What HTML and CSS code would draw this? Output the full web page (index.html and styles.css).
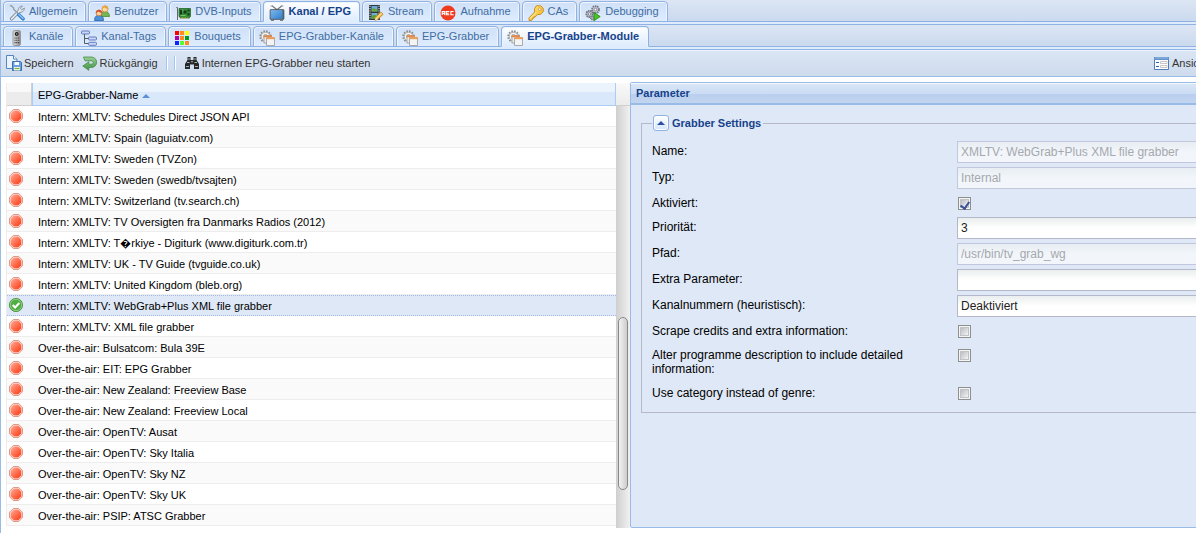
FILE: index.html
```
<!DOCTYPE html>
<html lang="de">
<head>
<meta charset="utf-8">
<title>EPG-Grabber-Module</title>
<link rel="stylesheet" href="styles.css">
</head>
<body>
<svg class="sprite" aria-hidden="true">
  <defs>
    <linearGradient id="red" x1="0" y1="0" x2="1" y2="1"><stop offset="0" stop-color="#ffac98"/><stop offset=".5" stop-color="#ff6f50"/><stop offset="1" stop-color="#f93a16"/></linearGradient>
    <linearGradient id="tvblue" x1="0" y1="0" x2="1" y2="1"><stop offset="0" stop-color="#7db8ee"/><stop offset="1" stop-color="#2f7fcb"/></linearGradient>
    <linearGradient id="undo" x1="0" y1="0" x2="0" y2="1"><stop offset="0" stop-color="#9bcf99"/><stop offset="1" stop-color="#3d9440"/></linearGradient>
    <linearGradient id="gold" x1="0" y1="0" x2="1" y2="1"><stop offset="0" stop-color="#ffef8a"/><stop offset="1" stop-color="#f0b01c"/></linearGradient>
    <linearGradient id="metal" x1="0" y1="0" x2="1" y2="0"><stop offset="0" stop-color="#e4e4e4"/><stop offset="1" stop-color="#8b8b8b"/></linearGradient>
  </defs>
  <symbol id="i-tools" viewBox="0 0 16 16">
    <path d="M2.600 13.800 10.500 6" stroke="#7b8794" stroke-width="3.400" stroke-linecap="round"/>
    <path d="M9.400 6.600C8.600 3.800 10.300 1 13.400 1l-2 2.400 1.300 1.400L15.300 3c.2 3-2.400 5-5 4.200z" fill="#dfe5ea" stroke="#7b8794" stroke-width=".8"/>
    <path d="M2.600 13.800 10.800 5.600" stroke="#e3e9ee" stroke-width="1.900" stroke-linecap="round"/>
    <path d="M1 1.200 2.200.5 4.600 3 4.700 4.200 9.500 9" fill="none" stroke="#98a2ac" stroke-width="1.500"/>
    <path d="m9.800 9.800 4.200 4" stroke="#3a80c8" stroke-width="3.600" stroke-linecap="round"/>
    <path d="m9.900 9.500 4.100 3.900" stroke="#83c0f3" stroke-width="1.500" stroke-linecap="round"/>
  </symbol>
  <symbol id="i-users" viewBox="0 0 16 16">
    <path d="M7 11.500c0-4 1.500-5 4-5s4.500 1.500 4.500 5z" fill="#76b553" stroke="#4c8a32" stroke-width=".8"/>
    <circle cx="11" cy="4" r="3" fill="#ffd9a0" stroke="#c8853b" stroke-width=".7"/>
    <path d="M7.700 4C7.500-.6 14.500-.6 14.300 4 12.500 3.800 11 3 10 2.300 9.500 3.200 8.600 3.800 7.700 4z" fill="#e9a13d"/>
    <path d="M.6 15.500c0-4 1.500-5 4.400-5s4.500 1.300 4.500 5z" fill="#4b92d9" stroke="#2463a8" stroke-width=".8"/>
    <circle cx="5" cy="8" r="2.900" fill="#ffd0a0" stroke="#b5622a" stroke-width=".7"/>
    <path d="M1.800 8C1.700 3.500 8.300 3.500 8.200 8 6.600 7.700 5.200 7 4.300 6.400 3.600 7.200 2.800 7.800 1.800 8z" fill="#d2562b"/>
  </symbol>
  <symbol id="i-card" viewBox="0 0 16 16">
    <path d="M2.500 2v13" stroke="#666"/><path d="M1 2.500h2" stroke="#888"/>
    <path d="M4 3.500h11.500v8h-1V13H5v-1.500H4z" fill="#328f36" stroke="#1c5a20" stroke-width=".7"/>
    <path d="M5.500 13h8" stroke="#e0bd42" stroke-width="1.200" stroke-dasharray="1 .5"/>
    <path d="M5 5h2v4.500H5zM8.500 5.500h3v3h-3zM12.500 4.500h2v2h-2zM12.500 8h2v2.500h-2z" fill="#163d18"/>
    <path d="M5.500 10.500h5M7.800 4.500v2" stroke="#9bd38c" stroke-width=".7"/>
  </symbol>
  <symbol id="i-tv" viewBox="0 0 16 16">
    <path d="m3 .8 5 4 5-4" fill="none" stroke="#6f7478" stroke-width="1.100"/>
    <path d="M1.500 1h2.500M12 1h2.500" stroke="#999"/>
    <rect x="1" y="4.500" width="14" height="10" rx=".8" fill="#5c656d" stroke="#454c52" stroke-width=".6"/>
    <path d="M1.600 5.100h11.900v8.700H1.600z" fill="url(#tvblue)"/>
    <path d="M2 15.300h3M11 15.300h3" stroke="#666"/>
  </symbol>
  <symbol id="i-film" viewBox="0 0 16 16">
    <path d="M1 0h11v15H1z" fill="#2f3438"/>
    <path d="M2 .7v14M11 .7v14" stroke="#f1f1f1" stroke-dasharray="1.200 1.100"/>
    <path d="M3.500 1h6v5.500h-6z" fill="#69abd8"/><path d="M3.500 4.500 6 3l3.500 2v1.500h-6z" fill="#66a737"/>
    <path d="M3.500 8h6v6h-6z" fill="#74b1d9"/><path d="m3.500 11 3-1.500 3 2V14h-6z" fill="#5c9d36"/>
    <path d="m7 15.300.7-3.200 5-5.200 2.400 2.300-5 5z" fill="#f6bf4b" stroke="#b97817" stroke-width=".8"/><path d="m7 15.300.7-3.200 2.400 2.100z" fill="#f6e3bd"/><path d="m9 12.700 4.700-4.700" stroke="#ffe9a8" stroke-width=".9"/>
  </symbol>
  <symbol id="i-rec" viewBox="0 0 16 16">
    <circle cx="8" cy="8" r="7.500" fill="#ef3b20"/>
    <path d="M2.200 10V6.500h2.500v1.700H2.200m1.300 0L5 10M9.300 6.500H6.300v3.300h3M6.300 8.200h2.500M13.700 6.500h-2.800v3.300h2.800" fill="none" stroke="#fff" stroke-width="1.100"/>
  </symbol>
  <symbol id="i-key" viewBox="0 0 16 16">
    <path d="M8.300.8h4.500l2.400 2.500v3.500L12.300 9.500H9.700L7.500 11.700H6.200V13H4.800l-.3 1.600-1.200.8H1v-2.500L6.600 7V3.600z" fill="url(#gold)" stroke="#c78513" stroke-width=".9"/>
    <circle cx="11.700" cy="4.200" r="1.300" fill="#fff" stroke="#c78513" stroke-width=".7"/><path d="m2 13.500 5.700-5.700" stroke="#fff6bd" stroke-width=".8"/>
  </symbol>
  <symbol id="i-debug" viewBox="0 0 16 16">
    <circle cx="10.500" cy="4.600" r="3.500" fill="#c4c5d1" stroke="#747786" stroke-width="1.800" stroke-dasharray="1.500 .7"/><circle cx="10.500" cy="4.600" r="1.300" fill="#fff" stroke="#686b78" stroke-width=".7"/>
    <circle cx="4.500" cy="9" r="3.200" fill="#bfc0cc" stroke="#70727f" stroke-width="1.800" stroke-dasharray="1.500 .7"/><circle cx="4.500" cy="9" r="1.200" fill="#fff" stroke="#686b78" stroke-width=".7"/>
    <circle cx="7.500" cy="13" r="1.900" fill="#aaaab8" stroke="#70727f" stroke-width="1.200" stroke-dasharray="1 .5"/>
    <path d="M9 7.500 15.200 11.600 9 15.700z" fill="#49c328" stroke="#23870e" stroke-width=".8"/>
  </symbol>
  <symbol id="i-remote" viewBox="0 0 16 16">
    <rect x="4" y=".5" width="7.400" height="15" rx="1.500" fill="url(#metal)" stroke="#888" stroke-width=".8"/>
    <circle cx="7.700" cy="4" r="2" fill="#222"/><circle cx="7.700" cy="4" r=".8" fill="#aaa"/>
    <path d="M5.400 8h5M5.400 10.300h5M5.400 12.600h5" stroke="#444" stroke-width="1.100" stroke-dasharray="1.200 .6"/>
  </symbol>
  <symbol id="i-tree" viewBox="0 0 16 16">
    <path d="M3.500 4v9.500H8M3.500 8.500H8" fill="none" stroke="#555b66"/>
    <g fill="#c8d6f8" stroke="#5a6fb8" stroke-width=".9"><rect x=".5" y="1" width="8" height="3" rx="1"/><rect x="7.500" y="7" width="8" height="3" rx="1"/><rect x="7.500" y="12.300" width="8" height="3" rx="1"/></g>
  </symbol>
  <symbol id="i-boxes" viewBox="0 0 16 16">
    <path fill="#f00" d="M1 1h4v4H1z"/><path fill="#ff8b1f" d="M6 1h4v4H6z"/><path fill="#ff0" d="M11 1h4v4h-4z"/>
    <path fill="#a0a" d="M1 6h4v4H1z"/><path fill="#ff8b1f" d="M6 6h4v4H6z"/><path fill="#092" d="M11 6h4v4h-4z"/>
    <path fill="#12f" d="M1 11h4v4H1z"/><path fill="#5f3" d="M6 11h4v4H6z"/><path fill="#ff8b1f" d="M11 11h4v4h-4z"/>
  </symbol>
  <symbol id="i-grab" viewBox="0 0 16 16">
    <circle cx="6.500" cy="6.500" r="5.200" fill="none" stroke="#8a8a8a" stroke-width="2" stroke-dasharray="1.500 1.220"/>
    <circle cx="6.500" cy="6.500" r="4.300" fill="#f3f3f3" stroke="#999" stroke-width=".8"/><circle cx="6.500" cy="6.500" r="1.900" fill="#fff" stroke="#888" stroke-width=".8"/>
    <path d="M5 6h7.500v7H5z" fill="#ececec" stroke="#999" stroke-width=".8"/><path d="M4.700 5.200h8v2h-8z" fill="#dd8b50"/>
    <path d="M7.500 8h8v7.500h-8z" fill="#f4f4f4" stroke="#999" stroke-width=".8"/><path d="M7.200 7h8.600v2.200H7.200z" fill="#e9a05e"/>
  </symbol>
  <symbol id="i-save" viewBox="0 0 16 16">
    <path d="M.5.5h7L11 4v9.500H.5z" fill="#eaf3fd" stroke="#5586bf"/><path d="M7.500.5V4H11" fill="#fff" stroke="#5586bf"/>
    <path d="M6.500 6.500h8l1 1v8h-9z" fill="#6b9fe0" stroke="#3a6eb4"/><path d="M8.500 7h4.500v3H8.500z" fill="#fff"/><path d="M8 12h6v3.500H8z" fill="#e8f2d4"/><path d="M8.500 13.500h5" stroke="#77ad45"/>
  </symbol>
  <symbol id="i-undo" viewBox="0 0 16 16">
    <path d="M1.500 2h7.500c7.500 0 7.500 10.500 0 10.500H6.800v2.800L.8 11l6-4.200v2.400H9c3 0 3-3.400 0-3.400H3z" fill="url(#undo)" stroke="#458c49" stroke-width=".8"/>
  </symbol>
  <symbol id="i-find" viewBox="0 0 16 16">
    <path d="M3.500 2h3v3h3V2h3v3l2.500 4v5h-5V9.500H6V14H1V9l2.500-4z" fill="#25282b"/>
    <path d="M4 4h2M10 4h2M3 7.500h2.500M10.500 7.500H13M2 11.500h3M11 11.500h3M7 6.700h2" stroke="#b7bdc2" stroke-width=".9"/>
  </symbol>
  <symbol id="i-view" viewBox="0 0 16 16">
    <path d="M.5 2.500h14v12H.5z" fill="#fff" stroke="#4f7fb9"/><path d="M0 2h15v3H0z" fill="#6291cc"/><path d="M1 3h13" stroke="#9bbce4"/>
    <path d="M2 7.500h3M2 11.500h3" stroke="#2b62ad"/><path d="M6.500 6.500h6.500v2H6.500zM6.500 10.500h6.500v2H6.500z" fill="#fff" stroke="#b9b9b9" stroke-width=".8"/>
  </symbol>
  <symbol id="i-stop" viewBox="0 0 16 16">
    <path d="M5.300 1.500h5.400l3.800 3.800v5.400l-3.800 3.800H5.300l-3.800-3.800V5.300z" fill="#ffd2c6" stroke="#dd9a8c"/>
    <path d="M5.800 2.800h4.400l3 3v4.400l-3 3H5.800l-3-3V5.800z" fill="url(#red)"/>
  </symbol>
  <symbol id="i-ok" viewBox="0 0 16 16">
    <circle cx="8" cy="8" r="6.600" fill="#4fae40" stroke="#4b8e40" stroke-width=".9"/><circle cx="8" cy="8" r="5.700" fill="none" stroke="#a4d798" stroke-width=".8"/>
    <path d="m4.700 8 2.400 2.500 4.200-4.500" fill="none" stroke="#fff" stroke-width="2"/>
  </symbol>
</svg>

<div class="app">
  <nav class="tabs">
    <div class="strip">
      <button class="tab"><svg class="icon"><use href="#i-tools"/></svg>Allgemein</button>
      <button class="tab"><svg class="icon"><use href="#i-users"/></svg>Benutzer</button>
      <button class="tab"><svg class="icon"><use href="#i-card"/></svg>DVB-Inputs</button>
      <button class="tab active"><svg class="icon"><use href="#i-tv"/></svg>Kanal / EPG</button>
      <button class="tab"><svg class="icon"><use href="#i-film"/></svg>Stream</button>
      <button class="tab"><svg class="icon"><use href="#i-rec"/></svg>Aufnahme</button>
      <button class="tab"><svg class="icon"><use href="#i-key"/></svg>CAs</button>
      <button class="tab"><svg class="icon"><use href="#i-debug"/></svg>Debugging</button>
    </div>
  </nav>
  <nav class="tabs sub">
    <div class="strip">
      <button class="tab"><svg class="icon"><use href="#i-remote"/></svg>Kanäle</button>
      <button class="tab"><svg class="icon"><use href="#i-tree"/></svg>Kanal-Tags</button>
      <button class="tab"><svg class="icon"><use href="#i-boxes"/></svg>Bouquets</button>
      <button class="tab"><svg class="icon"><use href="#i-grab"/></svg>EPG-Grabber-Kanäle</button>
      <button class="tab"><svg class="icon"><use href="#i-grab"/></svg>EPG-Grabber</button>
      <button class="tab active"><svg class="icon"><use href="#i-grab"/></svg>EPG-Grabber-Module</button>
    </div>
  </nav>
  <div class="toolbar">
    <button class="tool"><svg class="icon"><use href="#i-save"/></svg>Speichern</button>
    <button class="tool"><svg class="icon"><use href="#i-undo"/></svg>Rückgängig</button>
    <span class="seps"><i class="sep"></i><i class="sep"></i></span>
    <button class="tool"><svg class="icon"><use href="#i-find"/></svg>Internen EPG-Grabber neu starten</button>
    <button class="tool view"><svg class="icon"><use href="#i-view"/></svg>Ansicht</button>
  </div>

  <main class="main">
    <section class="list">
      <table class="grid">
        <thead><tr><th class="status"></th><th class="name">EPG-Grabber-Name<svg class="sort" viewBox="0 0 8 4"><path d="M0 4 4 0l4 4z"/></svg></th></tr></thead>
        <tbody>
          <tr><td class="status"><svg class="icon"><use href="#i-stop"/></svg></td><td>Intern: XMLTV: Schedules Direct JSON API</td></tr>
          <tr><td class="status"><svg class="icon"><use href="#i-stop"/></svg></td><td>Intern: XMLTV: Spain (laguiatv.com)</td></tr>
          <tr><td class="status"><svg class="icon"><use href="#i-stop"/></svg></td><td>Intern: XMLTV: Sweden (TVZon)</td></tr>
          <tr><td class="status"><svg class="icon"><use href="#i-stop"/></svg></td><td>Intern: XMLTV: Sweden (swedb/tvsajten)</td></tr>
          <tr><td class="status"><svg class="icon"><use href="#i-stop"/></svg></td><td>Intern: XMLTV: Switzerland (tv.search.ch)</td></tr>
          <tr><td class="status"><svg class="icon"><use href="#i-stop"/></svg></td><td>Intern: XMLTV: TV Oversigten fra Danmarks Radios (2012)</td></tr>
          <tr><td class="status"><svg class="icon"><use href="#i-stop"/></svg></td><td>Intern: XMLTV: T&#xFFFD;rkiye - Digiturk (www.digiturk.com.tr)</td></tr>
          <tr><td class="status"><svg class="icon"><use href="#i-stop"/></svg></td><td>Intern: XMLTV: UK - TV Guide (tvguide.co.uk)</td></tr>
          <tr><td class="status"><svg class="icon"><use href="#i-stop"/></svg></td><td>Intern: XMLTV: United Kingdom (bleb.org)</td></tr>
          <tr class="selected"><td class="status"><svg class="icon"><use href="#i-ok"/></svg></td><td>Intern: XMLTV: WebGrab+Plus XML file grabber</td></tr>
          <tr><td class="status"><svg class="icon"><use href="#i-stop"/></svg></td><td>Intern: XMLTV: XML file grabber</td></tr>
          <tr><td class="status"><svg class="icon"><use href="#i-stop"/></svg></td><td>Over-the-air: Bulsatcom: Bula 39E</td></tr>
          <tr><td class="status"><svg class="icon"><use href="#i-stop"/></svg></td><td>Over-the-air: EIT: EPG Grabber</td></tr>
          <tr><td class="status"><svg class="icon"><use href="#i-stop"/></svg></td><td>Over-the-air: New Zealand: Freeview Base</td></tr>
          <tr><td class="status"><svg class="icon"><use href="#i-stop"/></svg></td><td>Over-the-air: New Zealand: Freeview Local</td></tr>
          <tr><td class="status"><svg class="icon"><use href="#i-stop"/></svg></td><td>Over-the-air: OpenTV: Ausat</td></tr>
          <tr><td class="status"><svg class="icon"><use href="#i-stop"/></svg></td><td>Over-the-air: OpenTV: Sky Italia</td></tr>
          <tr><td class="status"><svg class="icon"><use href="#i-stop"/></svg></td><td>Over-the-air: OpenTV: Sky NZ</td></tr>
          <tr><td class="status"><svg class="icon"><use href="#i-stop"/></svg></td><td>Over-the-air: OpenTV: Sky UK</td></tr>
          <tr><td class="status"><svg class="icon"><use href="#i-stop"/></svg></td><td>Over-the-air: PSIP: ATSC Grabber</td></tr>
        </tbody>
      </table>
      <div class="scroll">
        <div class="scroll-head"></div>
        <div class="track"><div class="thumb"></div></div>
      </div>
    </section>

    <section class="panel">
      <h2 class="panel-title">Parameter</h2>
      <form class="panel-body">
        <fieldset class="settings">
          <legend><button type="button" class="toggle" aria-label="Einklappen"><svg class="arrow" viewBox="0 0 8 4"><path d="M0 4 4 0l4 4z"/></svg></button>Grabber Settings</legend>
          <div class="field"><label for="name">Name:</label><input class="text" id="name" type="text" value="XMLTV: WebGrab+Plus XML file grabber" disabled></div>
          <div class="field"><label for="type">Typ:</label><input class="text" id="type" type="text" value="Internal" disabled></div>
          <div class="field"><label for="enabled">Aktiviert:</label><input class="check" id="enabled" type="checkbox" checked></div>
          <div class="field"><label for="prio">Priorität:</label><input class="text" id="prio" type="text" value="3"></div>
          <div class="field"><label for="path">Pfad:</label><input class="text" id="path" type="text" value="/usr/bin/tv_grab_wg" disabled></div>
          <div class="field"><label for="extra">Extra Parameter:</label><input class="text" id="extra" type="text"></div>
          <div class="field"><label for="nums">Kanalnummern (heuristisch):</label><select class="text" id="nums"><option>Deaktiviert</option></select></div>
          <div class="field"><label for="scrape">Scrape credits and extra information:</label><input class="check" id="scrape" type="checkbox"></div>
          <div class="field"><label for="alter">Alter programme description to include detailed information:</label><input class="check" id="alter" type="checkbox"></div>
          <div class="field"><label for="category">Use category instead of genre:</label><input class="check" id="category" type="checkbox"></div>
        </fieldset>
      </form>
    </section>
  </main>
</div>
</body>
</html>
```
FILE: styles.css
```
* { box-sizing: border-box; }

html, body { height: 100%; }

body {
  margin: 0;
  overflow: hidden;
  font: 11px/13px "Liberation Sans", Arial, sans-serif;
  color: #000;
  background: #fff;
}

button, input, select { font: inherit; margin: 0; }

.sprite { position: absolute; width: 0; height: 0; }

.icon { display: block; flex: none; width: 16px; height: 16px; }

/* The workspace is wider than the window and is cut at its right edge. */
.app {
  display: flex;
  flex-direction: column;
  min-height: 100%;
  margin-right: -63px;
  border-left: 1px solid #99bbe8;
}

/* Tab strips */
.tabs {
  padding-bottom: 2px;
  background: #deecfd;
  border-bottom: 1px solid #8db2e3;
}

.strip {
  display: flex;
  gap: 2px;
  padding: 1px 2px 0;
  background: linear-gradient(#dce6f4, #cad9ee);
  box-shadow: inset 0 -1px #8db2e3;
}

.tab {
  display: flex;
  align-items: center;
  gap: 4px;
  height: 21px;
  padding: 0 8px 0 5px;
  border: 1px solid #8db2e3;
  border-radius: 4px 4px 0 0;
  background: linear-gradient(#cfe0f7, #deecfd);
  box-shadow: inset 1px 1px #eef5fe, inset -1px 0 #eef5fe;
  color: #416da3;
  white-space: nowrap;
}

.sub .tab { padding-right: 9px; }

.tab .icon { margin-top: 2px; }

.tab.active {
  border-bottom-color: #deecfd;
  background: linear-gradient(#fff, #deecfd);
  color: #15428b;
  font-weight: bold;
}

/* Toolbar */
.toolbar {
  display: flex;
  align-items: center;
  gap: 8px;
  height: 27px;
  padding: 0 5px;
  border-bottom: 1px solid #99bbe8;
  background: linear-gradient(#dbe6f4, #cedbed);
  box-shadow: inset 0 1px #eef4fb;
}

.tool {
  display: flex;
  align-items: center;
  gap: 2px;
  padding: 0;
  border: 0;
  background: none;
  color: #333;
  white-space: nowrap;
}

.view { margin-left: auto; padding-right: 46px; }

.seps { display: flex; gap: 6px; }

.sep { width: 2px; height: 14px; border-left: 1px solid #98c8ff; background: #fff; }

/* Work area */
.main {
  display: grid;
  grid-template-columns: repeat(2, minmax(0, 1fr));
  flex: 1;
  padding: 5px;
}

.list {
  display: grid;
  grid-template-columns: minmax(0, 1fr) 14px;
  padding-top: 1px;
}

.grid {
  align-self: start;
  width: 100%;
  border-collapse: separate;
  border-spacing: 0;
  table-layout: fixed;
  border-left: 1px solid #ededed;
}

.grid th {
  height: 23px;
  padding: 2px 0 0 5px;
  border-bottom: 1px solid #d0d0d0;
  background: linear-gradient(#f9f9f9 40%, #ececec 40%);
  font-weight: normal;
  text-align: left;
}

.grid th.status { width: 25px; border-right: 1px solid #d0d0d0; }

.grid th.name {
  border: 1px solid #aaccf6;
  border-top: 0;
  background: linear-gradient(#ebf3fd 40%, #d9e8fb 40%);
}

.sort { width: 8px; height: 4px; margin-left: 4px; vertical-align: 1px; fill: #5c8fd6; }

.grid td {
  height: 21px;
  padding: 2px 0 0 6px;
  border-bottom: 1px solid #ededed;
  white-space: nowrap;
}

.grid td.status { padding: 0 0 0 1px; }

.grid tbody tr:nth-child(even) td { background: #fafafa; }

.grid tbody tr.selected td {
  padding-top: 1px;
  border-top: 1px dotted #a3bae9;
  border-bottom: 1px dotted #a3bae9;
  background: #dfe8f6;
}

.grid tbody tr.selected td.status { padding: 0 0 2px 1px; }

.scroll { display: flex; flex-direction: column; }

.scroll-head {
  height: 23px;
  border-bottom: 1px solid #d0d0d0;
  background: linear-gradient(#f9f9f9, #ececec);
}

.track {
  flex: 1;
  display: grid;
  grid-template-rows: 50fr 41fr 9fr;
  padding: 0 2px;
  background: linear-gradient(90deg, #cfcfcf, #f1f1f1);
}

.thumb {
  grid-row: 2;
  border: 1px solid #888;
  border-radius: 5px;
  background: linear-gradient(90deg, #f2f2f2, #cdcdcd);
}

/* Parameter panel */
.panel {
  display: flex;
  flex-direction: column;
  border: 1px solid #99bbe8;
  border-radius: 2px;
  background: #dfe8f6;
}

.panel-title {
  height: 22px;
  margin: 0;
  padding: 4px 5px;
  border-bottom: 1px solid #99bbe8;
  background: linear-gradient(#dbe7f6, #cbdcf3 50%, #b9ceee 50%, #c3d6f0);
  box-shadow: inset 0 1px #f3f8fd, inset 0 -1px #99bbe8;
  color: #15428b;
  font-size: 11px;
}

.panel-body { padding: 10px; }

.settings {
  min-width: 0;
  margin: 0;
  padding: 10px 10px 5px;
  border: 1px solid #b5b8c8;
}

.settings legend {
  display: flex;
  align-items: center;
  gap: 3px;
  padding: 0 2px 0 1px;
  color: #15428b;
  font-weight: bold;
}

.toggle {
  display: grid;
  place-items: center;
  width: 16px;
  height: 16px;
  padding: 0;
  border: 1px solid #8db2e3;
  border-radius: 3px;
  background: linear-gradient(#fff, #d3e6fc);
  box-shadow: inset 0 0 0 1px #fff;
}

.arrow { width: 8px; height: 4px; fill: #2c4fa8; }

.field {
  display: grid;
  grid-template-columns: 305px minmax(0, 1fr);
  align-items: start;
  font-size: 12px;
  line-height: 14px;
}

.field label { padding: 3px 5px 7px 0; }

.text {
  width: 100%;
  height: 22px;
  margin-bottom: 4px;
  padding: 0 3px;
  appearance: none;
  border: 1px solid #b5b8c8;
  border-radius: 0;
  background: linear-gradient(#eaeeee, #fff 10px);
  color: #222;
}

.text:disabled {
  border-color: #c2c7dc;
  background: linear-gradient(#e7edf2, #f2f6fb 10px);
  color: #a5a8ad;
}

.check {
  width: 13px;
  height: 13px;
  margin: 4px 0 0 1px;
  appearance: none;
  border: 1px solid #8e8f8f;
  background: linear-gradient(135deg, #b9bcc2, #f4f4f4) content-box, #fff;
  padding: 2px;
  box-shadow: inset 0 0 0 1px #f4f4f4, inset 0 0 0 2px #bfc3c8;
}

.check:checked {
  display: grid;
  justify-items: center;
  align-items: start;
}

.check:checked::before {
  content: "";
  width: 4px;
  height: 7px;
  border: solid #3a4f95;
  border-width: 0 2px 2px 0;
  transform: rotate(35deg);
}
```
